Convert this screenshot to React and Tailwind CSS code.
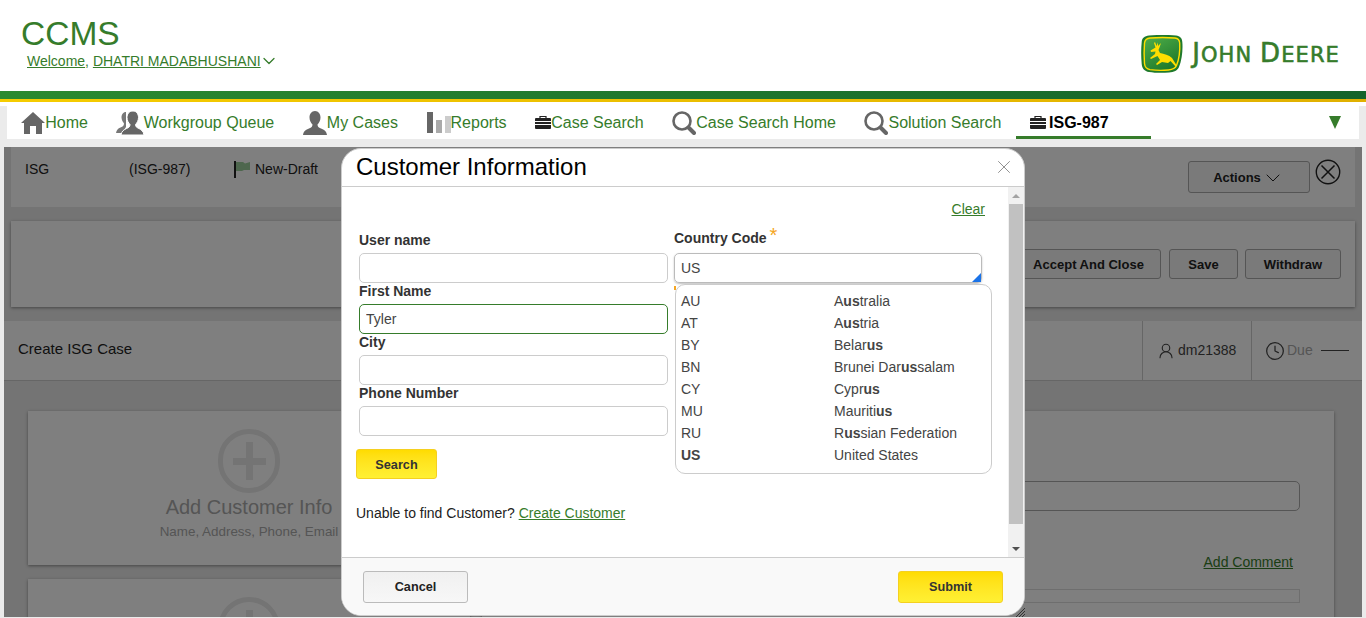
import React from 'react';
import { ChevronDown, Clock, UserRound, X } from 'lucide-react';

const HomeIcon = () => (
  <svg width="24" height="22" viewBox="0 0 24 22" className="shrink-0">
    <path d="M12 0 L24 11 L21 11 L21 22 L15 22 L15 14 L9 14 L9 22 L3 22 L3 11 L0 11 Z" fill="#666" />
  </svg>
);

const UserIcon = () => (
  <svg width="24" height="24" viewBox="0 0 24 24" className="shrink-0">
    <path d="M12 0 C8.5 0 6.5 3 6.5 6.5 C6.5 9.5 8 12 9.5 13.5 C9.5 15.5 8.5 16.5 6 17.5 C3 18.8 0.5 20 0 24 L24 24 C23.5 20 21 18.8 18 17.5 C15.5 16.5 14.5 15.5 14.5 13.5 C16 12 17.5 9.5 17.5 6.5 C17.5 3 15.5 0 12 0 Z" fill="#666" />
  </svg>
);

const GroupIcon = () => (
  <svg width="28" height="24" viewBox="0 0 28 24" className="shrink-0">
    <path d="M10 1 C7 1 5.5 3.5 5.5 6.5 C5.5 9 7 11 8 12.5 C8 14.5 7 15.5 4.5 16.5 C2 17.5 0.5 19 0 22 L6 22 L10 16 L10 1 Z" fill="#777" />
    <path d="M17 0 C13 0 11 3 11 6.5 C11 9.5 12.5 12 14 13.5 C14 15.5 13 16.5 10.5 17.5 C8 18.8 5.5 20 5 24 L28 24 C27.5 20 25 18.8 23 17.5 C20.5 16.5 19.5 15.5 19.5 13.5 C21 12 22.5 9.5 22.5 6.5 C22.5 3 20.5 0 17 0 Z" fill="#666" stroke="#fff" strokeWidth="1" />
  </svg>
);

const BarsIcon = () => (
  <svg width="24" height="21" viewBox="0 0 24 21" className="shrink-0">
    <rect x="0" y="0" width="6" height="21" fill="#666" />
    <rect x="9" y="8" width="6" height="13" fill="#aaa" />
    <rect x="18" y="4" width="6" height="17" fill="#ccc" />
  </svg>
);

const CaseIcon = () => (
  <svg width="16" height="13" viewBox="0 0 16 13" className="shrink-0">
    <path d="M5 2 L5 0.5 L11 0.5 L11 2" fill="none" stroke="#222" strokeWidth="1.2" />
    <rect x="0" y="2" width="16" height="11" rx="1" fill="#222" />
    <rect x="0" y="5" width="16" height="1" fill="#fff" />
    <rect x="0" y="8" width="16" height="1" fill="#fff" />
  </svg>
);

const SearchIcon = () => (
  <svg width="24" height="24" viewBox="0 0 24 24" className="shrink-0">
    <circle cx="10" cy="10" r="8.5" fill="none" stroke="#666" strokeWidth="2.6" />
    <path d="M16.5 16.5 L22 22" stroke="#666" strokeWidth="4" strokeLinecap="round" />
  </svg>
);

const CloseCircle = () => (
  <svg width="26" height="26" viewBox="0 0 26 26" className="shrink-0">
    <circle cx="13" cy="13" r="11.7" fill="none" stroke="#222" strokeWidth="1.4" />
    <path d="M6.5 6.5 L19.5 19.5 M19.5 6.5 L6.5 19.5" stroke="#222" strokeWidth="1.5" />
  </svg>
);

const DeereMark = () => (
  <svg width="42" height="38" viewBox="0 0 42 38" className="shrink-0">
    <defs>
      <linearGradient id="deereGreen" x1="0" y1="0" x2="0.6" y2="1">
        <stop offset="0" stopColor="#4fae4a" />
        <stop offset="1" stopColor="#1f7a2b" />
      </linearGradient>
    </defs>
    <path d="M8 0.5 C16 -0.3 28 -0.3 35 0.5 C39 1 41 3 41.3 7 C42 14 41 25 38 32 C36.5 35.5 33 37 28 37.5 C22 38 14 38 8 37 C3.5 36.3 1 33.5 0.7 29 C0 21 0 14 0.7 7 C1 3 3.5 1 8 0.5 Z" fill="#1f7a2b" />
    <path d="M9 3 C16 2.4 27 2.4 34 3 C37 3.4 38.5 5 38.7 8 C39 14 38.2 24 35.5 30.5 C34.3 33.3 31.5 34.6 27.5 35 C22 35.5 14.5 35.4 9 34.6 C5.5 34 3.8 32 3.5 28.5 C3 21 3 14 3.5 8 C3.8 5 5.5 3.4 9 3 Z" fill="url(#deereGreen)" stroke="#ffde00" strokeWidth="1.4" />
    <path d="M14 7 L15.5 11 L17 7.5 L17 11 L20 8 L18.5 12.5 L17.5 15 L19 18 C23 19 28 20 31 23 L36 31 L34.5 31.5 L29.5 26 L27 28 L21 27 L16 30 L15 29 L19 25 L16.5 21 L10 24 L9 23 L14 19 L14.5 16.5 L10 17 L9.5 15.5 L14.5 12.5 L13 8 Z" fill="#ffde00" />
  </svg>
);

const NavItem = ({ icon, label, active, className = '' }) => (
  <div className={`h-[33px] flex items-center px-[14.3px] text-[16px] ${active ? 'relative font-bold text-black pr-[42px]' : 'text-[#367c2b]'} ${className}`}>
    {icon}
    <span className={active ? 'ml-[3px]' : ''}>{label}</span>
    {active && <div className="absolute left-0 right-0 bottom-0 h-[3px] bg-[#367c2b]" />}
  </div>
);

const Field = ({ label, value, focused }) => (
  <div>
    <label className="block text-[14px] leading-[16px] font-bold text-[#333] mb-[5px]">{label}</label>
    <input
      readOnly
      value={value || ''}
      className={`w-full h-[30px] rounded-[5px] border px-[6px] text-[14px] text-[#444] bg-white outline-none ${focused ? 'border-[#367c2b]' : 'border-[#ccc]'}`}
    />
  </div>
);

const countries = [
  ['AU', <>A<b>us</b>tralia</>],
  ['AT', <>A<b>us</b>tria</>],
  ['BY', <>Belar<b>us</b></>],
  ['BN', <>Brunei Dar<b>us</b>salam</>],
  ['CY', <>Cypr<b>us</b></>],
  ['MU', <>Mauriti<b>us</b></>],
  ['RU', <>R<b>us</b>sian Federation</>],
  [<b>US</b>, 'United States'],
];

const BackButton = ({ children, className }) => (
  <button className={`h-[30px] pt-[1px] rounded-[3px] border border-[#aaa] bg-[#f4f4f4] text-[13px] font-bold text-[#222] ${className}`}>
    {children}
  </button>
);

const AddCard = ({ title, sub, className }) => (
  <div className={`bg-white shadow-[0_1px_3px_rgba(0,0,0,0.4)] flex flex-col items-center ${className}`}>
    <div className="mt-[18px] w-[62px] h-[64px] rounded-full border-[5px] border-[#e8e8e8] flex items-center justify-center relative">
      <div className="w-[33px] h-[7px] bg-[#e8e8e8]" />
      <div className="absolute w-[7px] h-[38px] bg-[#e8e8e8]" />
    </div>
    <div className="mt-[2px] text-[20px] leading-[24px] text-[#aaa]">{title}</div>
    <div className="mt-[4px] text-[13.4px] leading-[18px] text-[#aaa]">{sub}</div>
  </div>
);

const YellowButton = ({ children, className }) => (
  <button className={`pt-[3px] rounded-[3px] border border-[#f5d020] bg-linear-to-b from-[#ffdc00] to-[#fff033] text-[12.7px] font-bold text-[#333] ${className}`}>
    {children}
  </button>
);

export default function App() {
  return (
    <div className="h-screen overflow-hidden bg-[#ebebeb] font-['Liberation_Sans',Arial,sans-serif] flex flex-col">
      {/* Header */}
      <div className="h-[91px] bg-white flex justify-between shrink-0">
        <div className="pl-[21px] pt-[14px]">
          <div className="text-[33.5px] leading-[39px] text-[#367c2b]">CCMS</div>
          <div className="ml-[6px] mt-[-2px] flex items-center text-[14px] leading-[20px] text-[#367c2b]">
            <span className="underline">Welcome</span>,&nbsp;<span className="underline">DHATRI MADABHUSHANI</span>
            <ChevronDown size={20} strokeWidth={1.5} className="-ml-[2px]" />
          </div>
        </div>
        <div className="flex items-start pt-[35px] pr-[26px]">
          <DeereMark />
          <div className="ml-[9px] mt-[4px] font-['DejaVu_Sans',sans-serif] text-[#367c2b] text-[21px] leading-[28px] tracking-[1.1px] [-webkit-text-stroke:0.6px_#367c2b] whitespace-nowrap">
            <span className="text-[26px]">J</span>OHN <span className="text-[26px]">D</span>EERE
          </div>
        </div>
      </div>
      <div className="h-[8px] shrink-0 bg-linear-to-r from-[#2a8a30] to-[#14632a]" />
      <div className="h-[3px] shrink-0 bg-linear-to-r from-[#f5cc00] to-[#e0b000]" />
      <div className="h-[4px] shrink-0 bg-white" />

      {/* Nav */}
      <div className="mx-[7px] h-[33px] bg-white flex items-center shrink-0 relative">
        <NavItem icon={<HomeIcon />} label="Home" className="pr-[13.5px]" />
        <NavItem icon={<GroupIcon />} label="Workgroup Queue" />
        <NavItem icon={<UserIcon />} label="My Cases" />
        <NavItem icon={<BarsIcon />} label="Reports" />
        <NavItem icon={<CaseIcon />} label="Case Search" />
        <NavItem icon={<SearchIcon />} label="Case Search Home" />
        <NavItem icon={<SearchIcon />} label="Solution Search" />
        <NavItem icon={<CaseIcon />} label="ISG-987" active />
        <div className="ml-auto mr-[15px] w-0 h-0 -translate-x-[3px] border-l-[6px] border-r-[6px] border-t-[13px] border-l-transparent border-r-transparent border-t-[#367c2b]" />
      </div>

      {/* Case page behind the dialog */}
      <div className="relative mx-[4px] mt-[8px] h-[470px] shrink-0 bg-[#e8e8e8] overflow-hidden">
        <div className="mx-[7px] h-[60px] bg-white flex pl-[14px] text-[14px] text-[#222] relative">
          <span className="mt-[12px] w-[104px]">ISG</span>
          <span className="mt-[12px] w-[105px]">(ISG-987)</span>
          <svg width="18" height="17" viewBox="0 0 18 17" className="mt-[14px]">
            <rect x="0" y="0" width="2" height="17" fill="#222" />
            <path d="M2 1 L9 1 L11 2.5 L16 1 L16 9 L10 9 L8 10 L2 10 Z" fill="#9ccf9c" />
          </svg>
          <span className="mt-[12px] ml-[3px]">New-Draft</span>
          <div className="ml-auto flex items-start mt-[14px] mr-[14px] gap-[5px]">
            <button className="w-[122px] h-[32px] pt-[1px] rounded-[3px] border border-[#aaa] bg-[#f4f4f4] text-[13px] font-bold text-[#222] flex items-center justify-center">
              Actions <ChevronDown size={24} strokeWidth={1} />
            </button>
            <div className="-mt-[2px]"><CloseCircle /></div>
          </div>
        </div>

        <div className="mx-[7px] mt-[14px] h-[86px] bg-white shadow-[0_1px_3px_rgba(0,0,0,0.4)] flex items-center justify-end gap-[8px] pr-[14px]">
          <BackButton className="w-[145px]">Accept And Close</BackButton>
          <BackButton className="w-[69px]">Save</BackButton>
          <BackButton className="w-[96px] -ml-px">Withdraw</BackButton>
        </div>

        <div className="mt-[14px] h-[60px] bg-white border-b border-[#ccc] flex items-stretch text-[14px]">
          <div className="flex-1 flex items-center pl-[14px] pb-[2px] text-[15px] text-[#222]">Create ISG Case</div>
          <div className="w-[109px] border-l border-[#ccc] flex items-center pl-[14px] text-[#444]">
            <UserRound size={18} strokeWidth={1.5} className="mr-[3px]" /> dm21388
          </div>
          <div className="w-[111px] border-l border-[#ccc] flex items-center pl-[13px] text-[#aaa]">
            <Clock size={20} strokeWidth={1.5} className="text-[#444] mr-[2px]" /> Due
            <div className="ml-[8px] w-[28px] h-px bg-[#444]" />
          </div>
        </div>

        <div className="ml-[24px] mr-[28px] mt-[30px] flex gap-[12px]">
          <div className="w-[442px] shrink-0">
            <AddCard title="Add Customer Info" sub="Name, Address, Phone, Email" className="h-[154px]" />
            <AddCard title="" sub="" className="h-[154px] mt-[14px]" />
          </div>
          <div className="flex-1 bg-white shadow-[0_1px_3px_rgba(0,0,0,0.4)] h-[300px] pr-[34px] pt-[70px] flex flex-col items-end">
            <div className="w-full h-[30px] rounded-[5px] border border-[#aaa]" />
            <div className="mt-[41px] mr-[7px] text-[14px] leading-[20px] text-[#367c2b] underline">Add Comment</div>
            <div className="w-full mt-[17px] h-[14px] border border-[#ddd]" />
          </div>
        </div>

        {/* Backdrop */}
        <div className="absolute inset-0 bg-black/50" />

        {/* Customer Information dialog */}
        <div className="absolute left-[337px] top-px w-[684px] h-[468px] bg-white rounded-[20px] border border-[#ccc] flex flex-col overflow-hidden">
          <div className="h-[38px] shrink-0 border-b border-[#ccc] flex items-center justify-between pl-[14px] pr-[9px] pb-[2px]">
            <h3 className="text-[24px] leading-[34px] text-black">Customer Information</h3>
            <X size={22} strokeWidth={1} className="text-[#888]" />
          </div>

          <div className="flex-1 min-h-0 flex">
            <div className="flex-1 pl-[17px] pt-[12px] relative">
              <div className="pr-[23px] flex justify-end text-[14px] leading-[20px] text-[#367c2b] underline">Clear</div>
              <div className="mt-[13px] flex gap-[6px] items-start">
                <div className="w-[309px] shrink-0">
                  <Field label="User name" />
                  <Field label="First Name" value="Tyler" focused />
                  <Field label="City" />
                  <Field label="Phone Number" />
                  <YellowButton className="-ml-[3px] mt-[13px] w-[81px] h-[30px]">Search</YellowButton>
                </div>
                <div className="w-[317px] -mt-[5px]">
                  <label className="block text-[14px] leading-[16px] font-bold text-[#333] h-[26px]">
                    Country Code <span className="text-[20px] leading-[16px] font-normal text-[#f5a623] -ml-[1px] align-[1px]">*</span>
                  </label>
                  <div className="relative w-[308px] h-[30px] rounded-[5px] border border-[#bbb] px-[6px] text-[14px] leading-[28px] text-[#444] shadow-[0_1px_2px_rgba(0,0,0,0.25)]">
                    US
                    <div className="absolute right-0 bottom-0 w-0 h-0 border-l-[9px] border-b-[9px] border-l-transparent border-b-[#1a73e8]" />
                  </div>
                  <div className="relative ml-px mt-px w-[317px] h-[190px] rounded-[10px] border border-[#ccc] py-[5px] bg-white text-[14px] text-[#444]">
                    <div className="absolute -left-[2px] top-[1px] w-[2px] h-[4px] bg-[#f5a623]" />
                    {countries.map((row, i) => (
                      <div key={i} className="h-[22px] leading-[22px] flex pl-[5px]">
                        <span className="w-[153px]">{row[0]}</span>
                        <span>{row[1]}</span>
                      </div>
                    ))}
                  </div>
                </div>
              </div>
              <div className="-ml-[3px] mt-[24px] text-[14px] leading-[20px] text-[#222]">
                Unable to find Customer? <span className="text-[#367c2b] underline">Create Customer</span>
              </div>
            </div>

            {/* Scrollbar */}
            <div className="w-[16px] shrink-0 bg-[#f1f1f1] flex flex-col items-center">
              <div className="h-[17px] flex items-center justify-center">
                <div className="w-0 h-0 border-l-[4px] border-r-[4px] border-b-[4px] border-l-transparent border-r-transparent border-b-[#a3a3a3]" />
              </div>
              <div className="w-[14px] h-[320px] bg-[#c1c1c1]" />
              <div className="mt-auto h-[17px] flex items-center justify-center">
                <div className="w-0 h-0 border-l-[4px] border-r-[4px] border-t-[4px] border-l-transparent border-r-transparent border-t-[#505050]" />
              </div>
            </div>
          </div>

          <div className="h-[58px] shrink-0 border-t border-[#ccc] bg-[#f9f9f9] flex items-center justify-between pl-[21px] pr-[21px]">
            <button className="w-[105px] h-[32px] pt-[3px] rounded-[3px] border border-[#bbb] bg-linear-to-b from-[#f0f0f0] to-[#f7f7f7] text-[12.7px] font-bold text-[#222]">Cancel</button>
            <YellowButton className="w-[105px] h-[32px]">Submit</YellowButton>
          </div>
        </div>

        {/* Dialog resize grip */}
        <svg width="10" height="10" viewBox="0 0 10 10" className="absolute left-[1011px] top-[460px]">
          <path d="M1 10 L10 1 M4 10 L10 4 M7 10 L10 7" stroke="#333" strokeWidth="1" />
        </svg>
      </div>
    </div>
  );
}
